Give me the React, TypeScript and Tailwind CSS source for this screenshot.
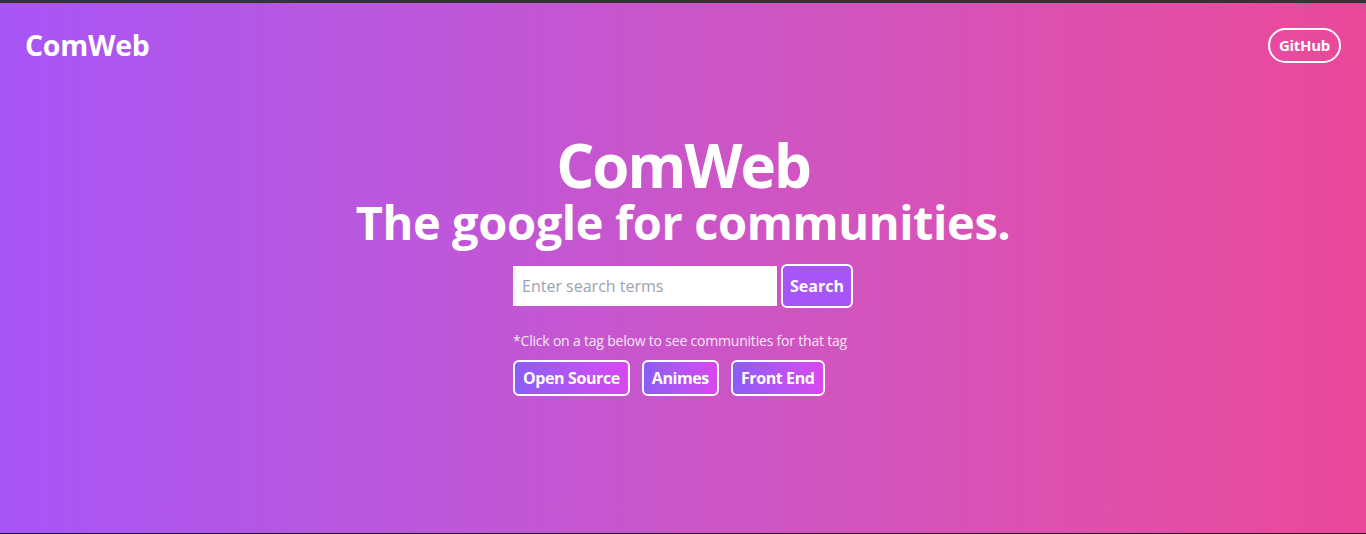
import React from 'react';

const tags = ['Open Source', 'Animes', 'Front End'];

const App: React.FC = () => {
  return (
    <div
      className="h-screen flex flex-col bg-gradient-to-r from-[#a855f7] to-[#ec4899] border-t-[3px] border-t-[#333333] border-b border-b-[#1a1028] text-white"
      style={{ fontFamily: '"Open Sans", "Liberation Sans", sans-serif' }}
    >
      {/* Navbar */}
      <nav className="flex items-center justify-between pl-[25px] pr-[25px] pt-[25px]">
        <a href="#" className="text-[28.5px] font-bold leading-none tracking-[-0.3px]">ComWeb</a>
        <a
          href="#"
          className="h-[35px] px-[9px] flex items-center rounded-full border-2 border-white text-[15px] font-bold tracking-[-0.3px]"
        >
          GitHub
        </a>
      </nav>

      {/* Hero */}
      <main className="flex flex-col items-center mt-[70px]">
        <h1 className="text-[60px] font-bold leading-[64px] tracking-[-2px]">ComWeb</h1>
        <h2 className="text-[47px] font-bold leading-[50px] tracking-[-0.4px]">The google for communities.</h2>

        <div className="w-[340px] mt-[17px]">
          <form className="flex items-center gap-[4px]" onSubmit={(e) => e.preventDefault()}>
            <input
              type="text"
              placeholder="Enter search terms"
              className="w-[264px] h-[40px] bg-white px-[9px] text-[16px] text-gray-700 placeholder:text-[#9aa3b0] outline-none"
            />
            <button
              type="submit"
              className="w-[72px] h-[44px] rounded-md border-2 border-white bg-[#a855f7] text-[16px] font-bold"
            >
              Search
            </button>
          </form>

          <p className="mt-[22px] text-[14px] text-[#f7e6f7] tracking-[-0.2px]">
            *Click on a tag below to see communities for that tag
          </p>

          <div className="flex gap-[12px] mt-[9px]">
            {tags.map((tag) => (
              <button
                key={tag}
                className="h-[36px] px-[8px] rounded-md border-2 border-white bg-gradient-to-r from-[#8b5cf6] to-[#d946ef] text-[16px] font-bold tracking-[-0.4px]"
              >
                {tag}
              </button>
            ))}
          </div>
        </div>
      </main>
    </div>
  );
};

export default App;
